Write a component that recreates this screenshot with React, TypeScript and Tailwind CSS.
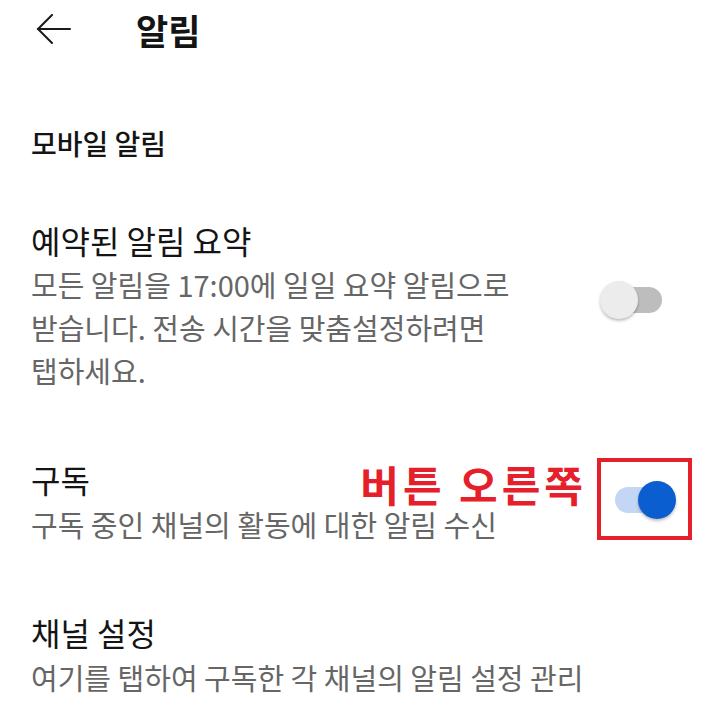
import { useState } from "react"

interface ToggleProps {
  checked: boolean
  onChange: (v: boolean) => void
}

function Toggle({ checked, onChange }: ToggleProps) {
  return (
    <button
      type="button"
      role="switch"
      aria-checked={checked}
      onClick={() => onChange(!checked)}
      className="relative w-[76px] h-[40px] shrink-0"
    >
      <span
        className={
          checked
            ? "absolute left-[15px] top-[7px] w-[47px] h-[26px] rounded-full bg-[#c3d7f4]"
            : "absolute left-[15px] top-[7px] w-[47px] h-[26px] rounded-full bg-[#bdbdbd]"
        }
      />
      <span
        className={
          checked
            ? "absolute left-[38px] top-[1px] w-[38px] h-[38px] rounded-full bg-[#0b5ed0] shadow-[0_2px_3px_rgba(0,0,0,0.25)]"
            : "absolute left-0 top-[1px] w-[38px] h-[38px] rounded-full bg-[#ececec] shadow-[0_2px_3px_rgba(0,0,0,0.25)]"
        }
      />
    </button>
  )
}

function BackArrow() {
  return (
    <svg width="36" height="32" viewBox="0 0 36 32" fill="none" stroke="#1a1a1a" strokeWidth="2" strokeLinecap="round">
      <path d="M2 15h32" />
      <path d="M16 1L2 15l14 14" />
    </svg>
  )
}

export default function App() {
  const [digest, setDigest] = useState(false)
  const [subs, setSubs] = useState(true)

  return (
    <div
      className="w-[720px] h-[705px] overflow-hidden bg-white text-[#141414] break-keep"
      style={{ fontFamily: '"Noto Sans CJK KR", "Noto Sans", sans-serif' }}
    >
      {/* Top bar */}
      <div className="h-[60px] flex items-center pl-[36px]">
        <BackArrow />
        <h1 className="ml-[64px] text-[35px] font-bold leading-none -mt-[2px]">알림</h1>
      </div>

      <div className="pl-[31px] pr-[44px]">
        <h2 className="mt-[65px] text-[28px] font-medium leading-[36px]">모바일 알림</h2>

        {/* Scheduled digest */}
        <div className="mt-[59px] flex items-center justify-between">
          <div className="w-[520px]">
            <div className="text-[32px] leading-[40px]">예약된 알림 요약</div>
            <div className="mt-[3px] text-[29px] leading-[43px] text-[#666666]">
              모든 알림을 17:00에 일일 요약 알림으로 받습니다. 전송 시간을 맞춤설정하려면 탭하세요.
            </div>
          </div>
          <div className="mb-[7px]">
            <Toggle checked={digest} onChange={setDigest} />
          </div>
        </div>

        {/* Subscriptions */}
        <div className="mt-[67px] flex items-center justify-between relative">
          <div>
            <div className="text-[32px] leading-[40px]">구독</div>
            <div className="mt-[4px] text-[29px] leading-[43px] text-[#666666]">
              구독 중인 채널의 활동에 대한 알림 수신
            </div>
          </div>
          <div className="mb-[1px] relative">
            <Toggle checked={subs} onChange={setSubs} />
            {/* callout */}
            <div className="absolute left-[-3px] top-[-22px] w-[95px] h-[82px] border-[4px] border-[#e5202a] pointer-events-none" />
            <div className="absolute right-[89px] top-[-14px] whitespace-nowrap text-[42px] font-bold leading-[36px] tracking-[4px] text-[#e5202a]">
              버튼 오른쪽
            </div>
          </div>
        </div>

        {/* Channel settings */}
        <div className="mt-[66px]">
          <div className="text-[32px] leading-[40px]">채널 설정</div>
          <div className="mt-[4px] text-[29px] leading-[43px] text-[#666666]">
            여기를 탭하여 구독한 각 채널의 알림 설정 관리
          </div>
        </div>
      </div>
    </div>
  )
}
